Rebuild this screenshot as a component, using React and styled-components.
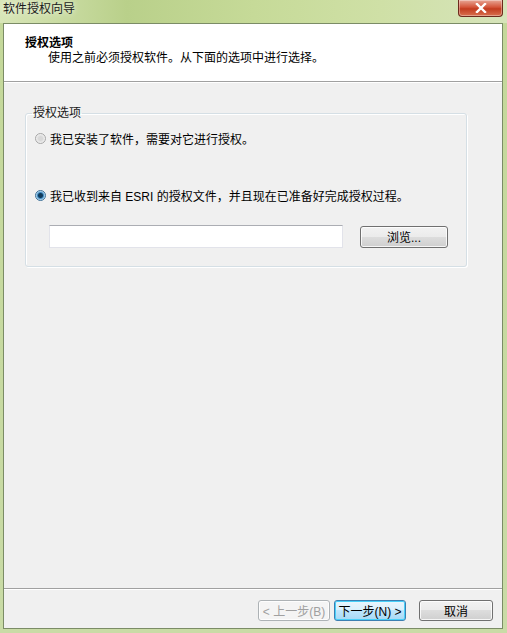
import React from 'react'
import styled, { createGlobalStyle } from 'styled-components'

const GlobalStyle = createGlobalStyle`
  html, body {
    margin: 0;
    padding: 0;
    background: #fff;
  }
  body {
    font-family: 'Liberation Sans', 'Noto Sans CJK SC', sans-serif;
    font-size: 12px;
    color: #000;
  }
`

const options = [
  { key: 'installed', label: '我已安装了软件，需要对它进行授权。', checked: false },
  { key: 'file', label: '我已收到来自 ESRI 的授权文件，并且现在已准备好完成授权过程。', checked: true }
]

const Window = styled.div`
  width: 507px;
  height: 633px;
  display: flex;
  flex-direction: column;
  box-sizing: border-box;
  background: linear-gradient(180deg, #cfe0a8 0%, #c4d89a 4%, #c9dba6 100%);
`

const TitleBar = styled.div`
  height: 23px;
  display: flex;
  align-items: flex-start;
  justify-content: space-between;
  padding-left: 3px;
  background: linear-gradient(90deg, #d8e6b8 0%, #b9d08a 25%, #c6da98 50%, #cfe0a6 75%, #d6e4ba 100%);

  span {
    line-height: 18px;
    color: #1b1b1b;
    text-shadow: 0 0 6px rgba(255, 255, 255, 0.9);
  }
`

const CloseButton = styled.div`
  width: 43px;
  height: 16px;
  margin-right: 4px;
  border: 1px solid #6d2a1c;
  border-top: none;
  border-radius: 0 0 4px 4px;
  background: linear-gradient(180deg, #e8a796 0%, #d4553a 45%, #c23c1f 55%, #d8704e 100%);
  display: flex;
  align-items: center;
  justify-content: center;
  box-shadow: inset 0 0 0 1px rgba(255, 255, 255, 0.35);
`

const Client = styled.div`
  flex: 1;
  margin: 0 4px 4px 3px;
  border: 1px solid #7b8c66;
  background: #f0f0f0;
  display: flex;
  flex-direction: column;
`

const Header = styled.div`
  height: 58px;
  box-sizing: border-box;
  background: #fff;
  border-bottom: 1px solid #a0a0a0;
  padding: 12px 0 0 21px;

  h1 {
    margin: 0;
    font-size: 12px;
    font-weight: bold;
    line-height: 15px;
  }

  p {
    margin: 0 0 0 23px;
    line-height: 15px;
  }
`

const Body = styled.div`
  flex: 1;
  border-top: 1px solid #fff;
  padding: 23px 35px 0 21px;
`

const Group = styled.fieldset`
  margin: 0;
  padding: 8px 10px 16px 9px;
  height: 161px;
  box-sizing: border-box;
  border: 1px solid #d5dfe5;
  border-radius: 3px;
  box-shadow: inset 1px 1px 0 #fff, 1px 1px 0 #fff;

  legend {
    padding: 0 1px;
    margin-left: -3px;
    line-height: 14px;
    color: #1a1a1a;
  }
`

const Option = styled.label`
  display: flex;
  align-items: center;
  gap: 4px;
  height: 16px;
  margin-top: ${(props) => props.$top}px;
`

const Radio = styled.span`
  width: 11px;
  height: 11px;
  border-radius: 50%;
  box-sizing: border-box;
  border: 1px solid ${(props) => (props.$checked ? '#3b6f97' : '#a6a6a6')};
  background: ${(props) =>
    props.$checked
      ? 'radial-gradient(circle, #0f3a5a 0 2px, #3d88c0 3px, #9ecbe8 4px, #e4f0f8 5px)'
      : 'radial-gradient(circle, #d8d8d8 0 2px, #ececec 4px, #fafafa 5px)'};
`

const FileRow = styled.div`
  display: flex;
  align-items: center;
  gap: 17px;
  margin: 22px 0 0 14px;
`

const PathInput = styled.div`
  width: 294px;
  height: 23px;
  box-sizing: border-box;
  background: #fff;
  border: 1px solid #e2e3ea;
  border-top-color: #abadb3;
`

const Button = styled.button`
  width: ${(props) => props.$width}px;
  height: ${(props) => props.$height || 22}px;
  padding: 0;
  box-sizing: border-box;
  font-family: 'Liberation Sans', 'Noto Sans CJK SC', sans-serif;
  font-size: 12px;
  color: ${(props) => (props.$disabled ? '#a0a0a0' : '#000')};
  border: 1px solid ${(props) => (props.$focused ? '#3c7fb1' : props.$disabled ? '#adb2b5' : '#707070')};
  border-radius: 3px;
  background: ${(props) =>
    props.$disabled
      ? '#f4f4f4'
      : props.$focused
      ? 'linear-gradient(180deg, #eaf6fd 0%, #d9f0fc 50%, #bee6fd 50%, #a7d9f5 100%)'
      : 'linear-gradient(180deg, #f2f2f2 0%, #ebebeb 50%, #dddddd 50%, #cfcfcf 100%)'};
  box-shadow: inset 0 0 0 1px ${(props) => (props.$focused ? '#48d0f9' : 'rgba(255,255,255,0.8)')};
`

const Footer = styled.div`
  height: 40px;
  box-sizing: border-box;
  border-top: 1px solid #a0a0a0;
  box-shadow: inset 0 1px 0 #fff;
  display: flex;
  align-items: flex-start;
  justify-content: flex-end;
  padding: 11px 9px 0 0;
  gap: 4px;
`

const App = () => {
  return (
    <>
      <GlobalStyle />
      <Window>
        <TitleBar>
          <span>软件授权向导</span>
          <CloseButton>
            <svg width="12" height="10" viewBox="0 0 12 10">
              <path d="M2 1 L10 9 M10 1 L2 9" stroke="#fff" strokeWidth="2.4" strokeLinecap="square" />
            </svg>
          </CloseButton>
        </TitleBar>
        <Client>
          <Header>
            <h1>授权选项</h1>
            <p>使用之前必须授权软件。从下面的选项中进行选择。</p>
          </Header>
          <Body>
            <Group>
              <legend>授权选项</legend>
              {options.map((option, index) => (
                <Option key={option.key} $top={index === 0 ? 2 : 41}>
                  <Radio $checked={option.checked} />
                  {option.label}
                </Option>
              ))}
              <FileRow>
                <PathInput />
                <Button $width={88}>浏览...</Button>
              </FileRow>
            </Group>
          </Body>
          <Footer>
            <Button $width={72} $height={21} $disabled>&lt; 上一步(B)</Button>
            <Button $width={72} $height={21} $focused>下一步(N) &gt;</Button>
            <Button $width={74} $height={21} style={{ marginLeft: 9 }}>取消</Button>
          </Footer>
        </Client>
      </Window>
    </>
  )
}

export default App
